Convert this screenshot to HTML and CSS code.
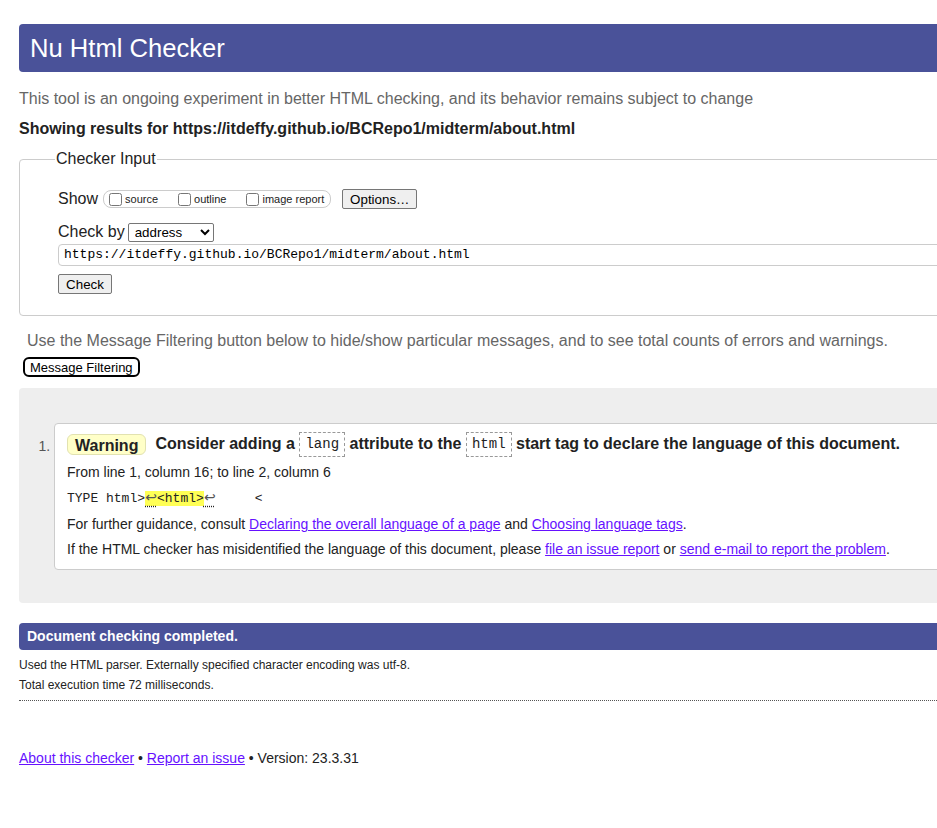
FILE: index.html
```html
<!DOCTYPE html>
<html lang="en">
<head>
<meta charset="utf-8">
<title>Showing results for https://itdeffy.github.io/BCRepo1/midterm/about.html - Nu Html Checker</title>
<link rel="stylesheet" href="styles.css">
</head>
<body>
<div class="page">
  <h1 class="title">Nu Html Checker</h1>
  <p class="intro">This tool is an ongoing experiment in better HTML checking, and its behavior remains subject to change</p>
  <p class="showing">Showing results for https://itdeffy.github.io/BCRepo1/midterm/about.html</p>

  <fieldset class="input-set">
    <legend class="legend">Checker Input</legend>
    <div class="row show-row">
      <span class="row-label">Show</span>
      <span class="show-box">
        <label class="opt"><input type="checkbox" class="cb"><span>source</span></label>
        <label class="opt"><input type="checkbox" class="cb"><span>outline</span></label>
        <label class="opt"><input type="checkbox" class="cb"><span>image report</span></label>
      </span>
      <button class="btn options-btn" type="button">Options…</button>
    </div>
    <div class="row check-row">
      <span class="row-label">Check by</span>
      <select class="select"><option>address</option></select>
    </div>
    <div class="url-box">https://itdeffy.github.io/BCRepo1/midterm/about.html</div>
    <button class="btn check-btn" type="button">Check</button>
  </fieldset>

  <p class="filter-note">Use the Message Filtering button below to hide/show particular messages, and to see total counts of errors and warnings.</p>
  <button class="filter-btn" type="button">Message Filtering</button>

  <div class="results">
    <ol class="messages">
      <li class="msg">
        <p class="msg-head"><strong class="badge">Warning</strong><span class="msg-text">Consider adding a <code class="tok">lang</code> attribute to the <code class="tok">html</code> start tag to declare the language of this document.</span></p>
        <p class="loc first">From line 1, column 16; to line 2, column 6</p>
        <p class="extract"><code>TYPE html&gt;<b class="hl"><span class="lf">↩</span>&lt;html&gt;</b><span class="lf">↩</span>     &lt;</code></p>
        <p class="loc">For further guidance, consult <a href="#">Declaring the overall language of a page</a> and <a href="#">Choosing language tags</a>.</p>
        <p class="loc">If the HTML checker has misidentified the language of this document, please <a href="#">file an issue report</a> or <a href="#">send e-mail to report the problem</a>.</p>
      </li>
    </ol>
  </div>

  <h2 class="done">Document checking completed.</h2>
  <div class="details">
    <p>Used the HTML parser. Externally specified character encoding was utf-8.</p>
    <p>Total execution time 72 milliseconds.</p>
  </div>

  <p class="footer"><a href="#">About this checker</a> • <a href="#">Report an issue</a> • Version: 23.3.31</p>
</div>
</body>
</html>
```

FILE: styles.css
```css
html, body {
  margin: 0;
  padding: 0;
  overflow: hidden;
  background: #fff;
}
body {
  font-family: "Liberation Sans", Arial, sans-serif;
  color: #222;
  font-size: 16px;
}
.page {
  width: 1000px;
  padding: 24px 0 0 19px;
}
.title {
  margin: 0;
  height: 48px;
  line-height: 48px;
  padding: 0 11px;
  font-size: 25.6px;
  font-weight: normal;
  color: #fff;
  background: #4a5299;
  border-radius: 4px;
}
.intro {
  margin: 17px 0 0;
  line-height: 20px;
  color: #666;
}
.showing {
  margin: 10px 0 0;
  line-height: 20px;
  font-weight: bold;
  color: #222;
}
.input-set {
  margin: 10px 0 0;
  padding: 19px 0 21px 38px;
  border: 1px solid #ccc;
  border-radius: 4px;
  min-width: 0;
}
.legend {
  padding: 0 1px;
  margin-left: -3px;
  line-height: 20px;
  font-size: 16px;
  color: #222;
}
.row {
  display: flex;
  align-items: center;
}
.row-label {
  font-size: 16px;
  margin-right: 4px;
}
.show-row {
  height: 22px;
}
.show-box {
  display: inline-flex;
  align-items: center;
  height: 18px;
  border: 1px solid #ccc;
  border-radius: 8px;
  padding: 0 6px 0 5px;
  gap: 20px;
  box-sizing: border-box;
  margin-left: 1px;
}
.opt {
  display: inline-flex;
  align-items: center;
  font-size: 11px;
  line-height: 13px;
}
.cb {
  margin: 0 3px 0 0;
  width: 13px;
  height: 13px;
}
.btn {
  font-family: "Liberation Sans", Arial, sans-serif;
  font-size: 13.33px;
  height: 20px;
  padding: 0 6px;
  border: 1px solid #767676;
  border-radius: 2px;
  background: #efefef;
  color: #000;
}
.options-btn {
  margin-left: 11px;
  width: 75px;
}
.check-row {
  margin-top: 12px;
  height: 20px;
}
.select {
  font-family: "Liberation Sans", Arial, sans-serif;
  font-size: 13.33px;
  width: 86px;
  height: 19px;
  padding: 0 0 0 2px;
  margin-left: -1px;
  border: 1px solid #767676;
  border-radius: 2px;
  background: #fff;
  color: #000;
}
.url-box {
  margin-top: 2px;
  height: 22px;
  line-height: 20px;
  box-sizing: border-box;
  border: 1px solid #ccc;
  border-radius: 4px;
  padding: 0 5px;
  font-family: "Liberation Mono", "DejaVu Sans Mono", monospace;
  font-size: 13px;
  color: #000;
}
.check-btn {
  display: block;
  margin-top: 8px;
  width: 54px;
}
.filter-note {
  margin: 15px 0 0 8px;
  line-height: 20px;
  color: #666;
}
.filter-btn {
  display: block;
  margin: 6px 0 0 4px;
  height: 20px;
  padding: 0 5px;
  border: 2px solid #000;
  border-radius: 6px;
  background: #fff;
  font-family: "Liberation Sans", Arial, sans-serif;
  font-size: 13px;
  color: #000;
}
.results {
  margin-top: 11px;
  background: #eee;
  border-radius: 4px;
  padding: 35px 0 33px 0;
}
.messages {
  margin: 0;
  padding: 0 0 0 35px;
  font-size: 14px;
  color: #444;
}
.msg {
  background: #fff;
  border: 1px solid #ccc;
  border-radius: 4px;
  padding: 7px 12px 10px 12px;
  color: #222;
}
.msg::marker {
  color: #555;
  font-size: 14px;
}
.msg p {
  margin: 0;
}
.msg-head {
  display: flex;
  align-items: center;
  font-size: 16px;
  font-weight: bold;
  line-height: 25px;
}
.badge {
  display: inline-block;
  height: 21px;
  line-height: 21px;
  padding: 0 7px;
  box-sizing: border-box;
  background: #ffffc8;
  border: 1px solid #e2e2b0;
  border-radius: 6px;
  margin-right: 9px;
}
.msg-text {
  white-space: nowrap;
}
.tok {
  display: inline-block;
  font-family: "Liberation Mono", "DejaVu Sans Mono", monospace;
  font-weight: normal;
  font-size: 14px;
  line-height: 23px;
  padding: 0 5px;
  border: 1px dashed #999;
  vertical-align: middle;
}
.msg .loc {
  font-size: 14px;
  line-height: 20px;
  margin-top: 5px;
}
.msg .loc.first {
  margin-top: 5px;
}
.msg .extract {
  margin-top: 5px;
  line-height: 20px;
}
.extract code {
  font-family: "Liberation Mono", "DejaVu Sans Mono", monospace;
  font-size: 13px;
  white-space: pre;
  color: #222;
}
.hl {
  font-weight: normal;
  background: #ffff55;
}
.lf {
  display: inline-block;
  width: 12px;
  text-align: center;
  color: #555;
  font-family: "DejaVu Sans", sans-serif;
  font-size: 14px;
  line-height: 18px;
  text-decoration: underline dotted #222;
  text-underline-offset: 4px;
}
a {
  color: #6611ff;
  text-decoration: underline;
}
.done {
  margin: 20px 0 0;
  height: 27px;
  line-height: 27px;
  padding: 0 8px;
  font-size: 14px;
  font-weight: bold;
  color: #fff;
  background: #4a5299;
  border-radius: 4px;
}
.details {
  border-bottom: 1px dotted #555;
  padding: 5px 0 5px;
  font-size: 12px;
}
.details p {
  margin: 0;
  line-height: 20px;
}
.footer {
  margin: 47px 0 0;
  font-size: 14px;
  line-height: 20px;
}
```
